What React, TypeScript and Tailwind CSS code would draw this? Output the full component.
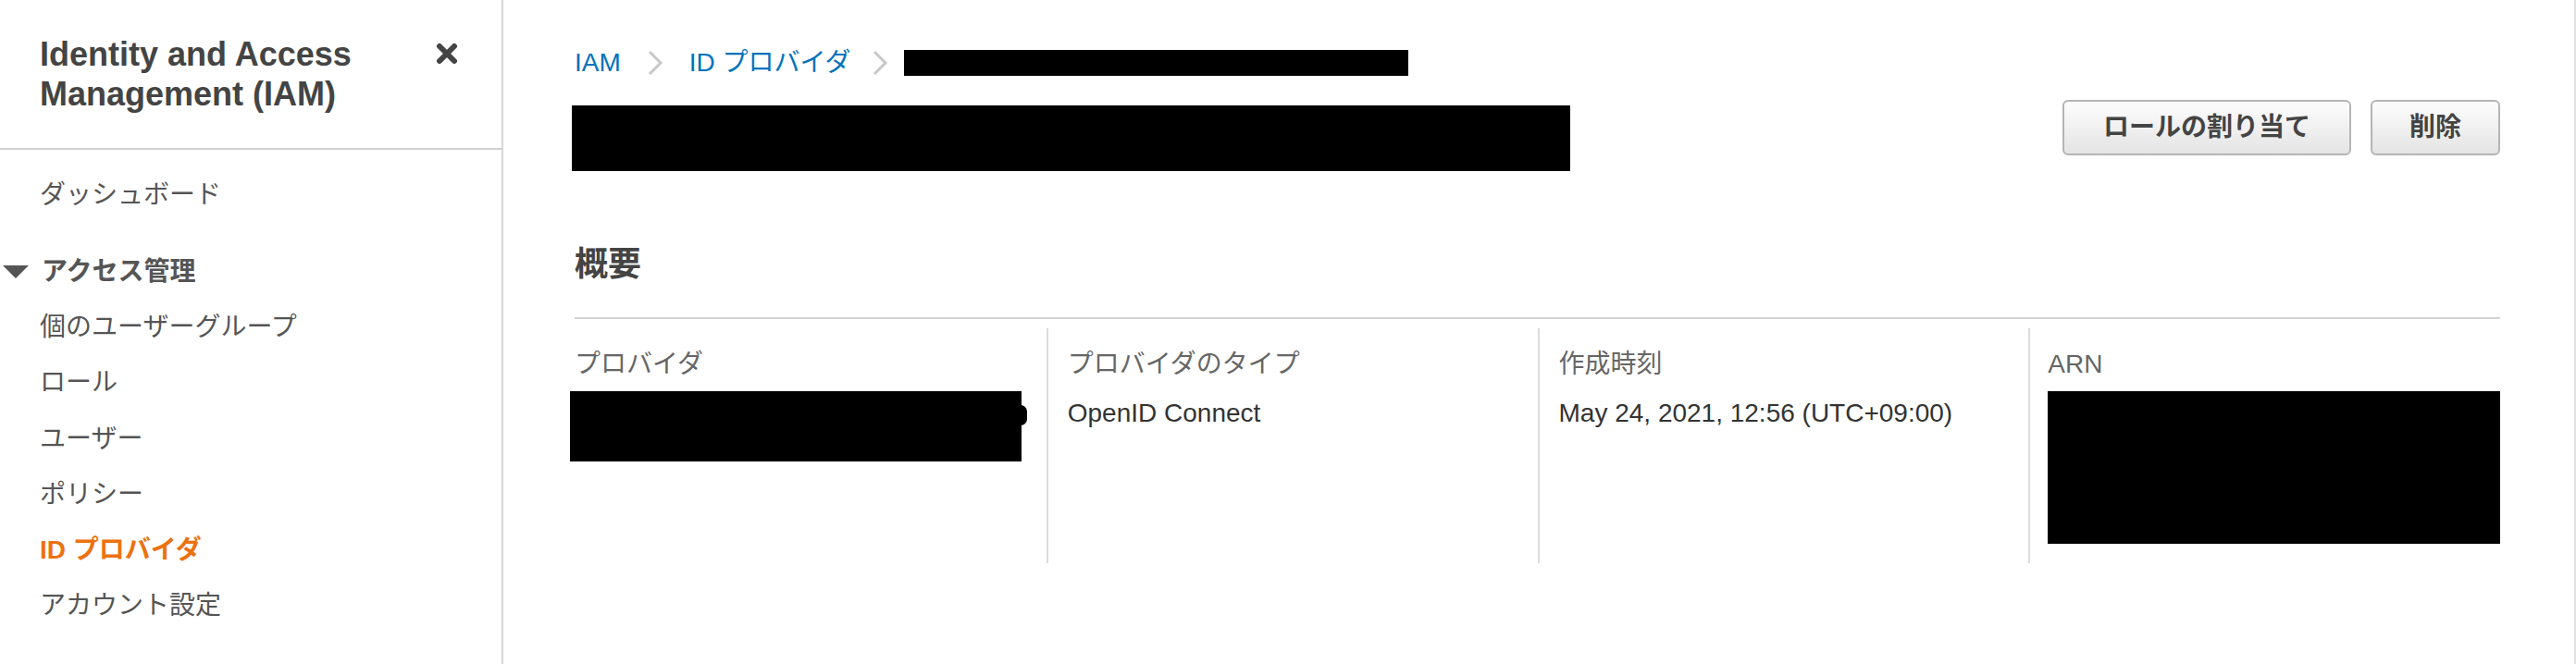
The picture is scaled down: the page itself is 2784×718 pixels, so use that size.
import React from "react";

function Chevron() {
  return (
    <svg width="18" height="30" viewBox="0 0 18 30" className="shrink-0">
      <polyline points="3,3 15,15 3,27" fill="none" stroke="#c8c8c8" strokeWidth="3" />
    </svg>
  );
}

function NavItem({ children, active }: { children: React.ReactNode; active?: boolean }) {
  return (
    <div
      className={
        active
          ? "h-[60.3px] leading-[60px] pl-[43px] text-[28px] font-bold text-[#ec7211]"
          : "h-[60.3px] leading-[60px] pl-[43px] text-[28px] text-[#555]"
      }
    >
      {children}
    </div>
  );
}

export default function App() {
  return (
    <div className="flex h-[718px] w-full overflow-hidden bg-white font-['Liberation_Sans','Noto_Sans_CJK_JP',sans-serif]">
      {/* Sidebar */}
      <aside className="h-full w-[544px] shrink-0 border-r-2 border-[#d6d6d6]">
        <div className="flex h-[162px] items-start justify-between border-b-2 border-[#d0d0d0] pl-[43px] pr-[47px] pt-[37px]">
          <h1 className="w-[400px] text-[36px] font-bold leading-[43px] text-[#444]">
            Identity and Access Management (IAM)
          </h1>
          <svg width="24" height="24" viewBox="0 0 24 24" className="mt-[9px] shrink-0">
            <path d="M4 4 L20 20 M20 4 L4 20" stroke="#444" strokeWidth="6" strokeLinecap="round" />
          </svg>
        </div>
        <nav className="pt-[19px]">
          <div className="h-[60px] pl-[43px] text-[28px] leading-[60px] text-[#555]">ダッシュボード</div>
          <div className="mt-[23px] flex h-[60px] items-center text-[28px] font-bold text-[#555]">
            <svg width="28" height="14" viewBox="0 0 28 14" className="ml-[3px] mr-[14px] shrink-0">
              <polygon points="0,0 28,0 14,14" fill="#555" />
            </svg>
            <span>アクセス管理</span>
          </div>
          <NavItem>個のユーザーグループ</NavItem>
          <NavItem>ロール</NavItem>
          <NavItem>ユーザー</NavItem>
          <NavItem>ポリシー</NavItem>
          <NavItem active>ID プロバイダ</NavItem>
          <NavItem>アカウント設定</NavItem>
        </nav>
      </aside>

      {/* Main */}
      <main className="h-full flex-1 border-r-2 border-[#e2e2e2] pl-[77px] pr-[80px]">
        {/* Breadcrumb */}
        <div className="mt-[48px] flex h-[40px] items-center text-[28px] text-[#0073bb]">
          <span>IAM</span>
          <span className="mx-[28px] flex items-center"><Chevron /></span>
          <span>ID プロバイダ</span>
          <span className="ml-[23px] mr-[17px] flex items-center"><Chevron /></span>
          <div className="h-[28px] w-[545px] bg-black" />
        </div>

        {/* Title row */}
        <div className="mt-[20px] flex items-start justify-between">
          <div className="-ml-[3px] mt-[6px] h-[71px] w-[1079px] bg-black" />
          <div className="flex gap-[21px]">
            <button className="h-[60px] rounded-[6px] border-2 border-[#b5b5b5] bg-linear-to-b from-[#fdfdfd] to-[#e4e4e4] px-[42px] text-[28px] font-bold text-[#444]">
              ロールの割り当て
            </button>
            <button className="h-[60px] rounded-[6px] border-2 border-[#b5b5b5] bg-linear-to-b from-[#fdfdfd] to-[#e4e4e4] px-[40px] text-[28px] font-bold text-[#444]">
              削除
            </button>
          </div>
        </div>

        {/* Summary */}
        <h2 className="mt-[79px] text-[36px] font-bold leading-[44px] text-[#444]">概要</h2>
        <div className="mt-[35px] h-[2px] bg-[#d3d3d3]" />

        <div className="-mx-[21px] mt-[10px] grid grid-cols-4">
          <div className="h-[254px] px-[21px] pt-[19px]">
            <div className="text-[28px] leading-[40px] text-[#666]">プロバイダ</div>
            <div className="relative -ml-[5px] mt-[9px] h-[76px] w-[488px] bg-black">
              <span className="absolute -right-[6px] top-[15px] h-[22px] w-[7px] rounded-r-full bg-black" />
            </div>
          </div>
          <div className="h-[254px] border-l-2 border-[#dcdcdc] px-[21px] pt-[19px]">
            <div className="text-[28px] leading-[40px] text-[#666]">プロバイダのタイプ</div>
            <div className="mt-[8px] text-[28px] leading-[50px] text-[#333]">OpenID Connect</div>
          </div>
          <div className="h-[254px] border-l-2 border-[#dcdcdc] px-[21px] pt-[19px]">
            <div className="text-[28px] leading-[40px] text-[#666]">作成時刻</div>
            <div className="mt-[8px] text-[28px] leading-[50px] text-[#333]">May 24, 2021, 12:56 (UTC+09:00)</div>
          </div>
          <div className="h-[254px] border-l-2 border-[#dcdcdc] pl-[19px] pr-[21px] pt-[19px]">
            <div className="text-[28px] leading-[40px] text-[#666]">ARN</div>
            <div className="mt-[9px] h-[165px] w-full bg-black" />
          </div>
        </div>
      </main>
    </div>
  );
}
